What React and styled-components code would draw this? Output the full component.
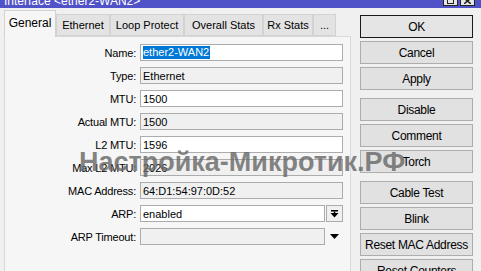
import React from "react";
import styled, { createGlobalStyle } from "styled-components";

const Global = createGlobalStyle`
  html, body { margin: 0; padding: 0; background: #f0f0f0; overflow: hidden; }
  * { box-sizing: border-box; }
`;

const Window = styled.div`
  position: relative;
  width: 481px;
  height: 271px;
  overflow: hidden;
  background: #f0f0f0;
  font-family: "Liberation Sans", Arial, sans-serif;
  font-size: 11px;
  color: #000;
`;

const TitleBar = styled.div`
  height: 8px;
  background: #5052c8;
  display: flex;
  justify-content: space-between;
  align-items: flex-end;
  overflow: hidden;
  padding: 0 6px 0 4px;
`;

const TitleText = styled.div`
  color: #fff;
  font-size: 12px;
  line-height: 12px;
  margin-bottom: 1px;
  white-space: nowrap;
`;

const WinButtons = styled.div`
  display: flex;
  gap: 2px;
  align-items: flex-end;
  margin-bottom: 2px;
`;

const WinBtn = styled.div`
  width: 15px;
  height: 12px;
  background: #e6e6e6;
  border: 1px solid #222;
  display: flex;
  align-items: flex-end;
  justify-content: center;
  padding-bottom: 1px;
`;

const Main = styled.div`
  display: flex;
  padding: 2px 0 0 4px;
`;

const LeftCol = styled.div`
  width: 347px;
  display: flex;
  flex-direction: column;
`;

const TabBar = styled.div`
  display: flex;
  align-items: flex-end;
  height: 26px;
`;

const Tab = styled.div`
  position: relative;
  width: ${(p) => p.$w}px;
  height: ${(p) => (p.$active ? 27 : 22)}px;
  margin-bottom: ${(p) => (p.$active ? -1 : 0)}px;
  z-index: ${(p) => (p.$active ? 2 : 1)};
  background: ${(p) => (p.$active ? "#f6f6f6" : "#e3e3e3")};
  border: 1px solid #d2d2d2;
  border-bottom: ${(p) => (p.$active ? "none" : "1px solid #d2d2d2")};
  display: flex;
  align-items: center;
  justify-content: center;
  padding-bottom: ${(p) => (p.$active ? 3 : 0)}px;
  font-size: ${(p) => (p.$active ? 12 : 11)}px;
  white-space: nowrap;
`;

const Panel = styled.div`
  height: 240px;
  background: #f6f6f6;
  border: 1px solid #d9d9d9;
  border-bottom: none;
  padding: 7px 0 0 0;
  display: flex;
  flex-direction: column;
  gap: 6px;
`;

const Row = styled.div`
  display: flex;
  align-items: center;
  height: 17px;
`;

const Label = styled.div`
  width: 131px;
  margin-right: 4px;
  text-align: right;
  white-space: nowrap;
  letter-spacing: -0.2px;
`;

const Field = styled.div`
  width: ${(p) => p.$w || 203}px;
  height: 17px;
  background: ${(p) => (p.$ro ? "#f0f0f0" : "#ffffff")};
  border: 1px solid #acacac;
  display: flex;
  align-items: center;
  padding-left: 2px;
  white-space: nowrap;
  overflow: hidden;
`;

const Selected = styled.span`
  background: #0078d7;
  color: #fff;
  line-height: 13px;
  padding-right: 1px;
`;

const DropBtn = styled.div`
  width: 17px;
  height: 17px;
  margin-left: 1px;
  background: #f0f0f0;
  border: 1px solid #acacac;
  display: flex;
  align-items: center;
  justify-content: center;
`;

const DropArrow = styled.div`
  width: 17px;
  height: 17px;
  margin-left: 1px;
  display: flex;
  align-items: center;
  justify-content: center;
`;

const RightCol = styled.div`
  width: 113px;
  margin-left: 9px;
  margin-top: 5px;
  display: flex;
  flex-direction: column;
  gap: 8px;
`;

const Group = styled.div`
  display: flex;
  flex-direction: column;
  gap: 3px;
`;

const Button = styled.div`
  height: 23px;
  background: ${(p) => (p.$default ? "#e5e5e5" : "#e1e1e1")};
  border: 1px solid ${(p) => (p.$default ? "#1a1a1a" : "#adadad")};
  display: flex;
  align-items: center;
  justify-content: center;
  white-space: nowrap;
  font-size: 12px;
  letter-spacing: -0.3px;
`;

const Watermark = styled.div`
  position: absolute;
  left: 79px;
  top: 149px;
  font-family: "Liberation Sans", Arial, sans-serif;
  font-weight: bold;
  font-size: 27px;
  line-height: 27px;
  color: rgba(105, 105, 105, 0.82);
  white-space: nowrap;
  pointer-events: none;
`;

const tabs = [
  { t: "General", w: 52, active: true },
  { t: "Ethernet", w: 54 },
  { t: "Loop Protect", w: 74 },
  { t: "Overall Stats", w: 79 },
  { t: "Rx Stats", w: 50 },
  { t: "...", w: 23 },
];

const rows = [
  { l: "Name:", v: "ether2-WAN2", sel: true },
  { l: "Type:", v: "Ethernet", ro: true },
  { l: "MTU:", v: "1500" },
  { l: "Actual MTU:", v: "1500", ro: true },
  { l: "L2 MTU:", v: "1596" },
  { l: "Max L2 MTU:", v: "2026", ro: true },
  { l: "MAC Address:", v: "64:D1:54:97:0D:52", ro: true },
];

const groups = [
  ["OK", "Cancel", "Apply"],
  ["Disable", "Comment", "Torch"],
  ["Cable Test", "Blink", "Reset MAC Address", "Reset Counters"],
];

export default function App() {
  return (
    <Window>
      <Global />
      <TitleBar>
        <TitleText>Interface &lt;ether2-WAN2&gt;</TitleText>
        <WinButtons>
          <WinBtn>
            <svg width="7" height="6" viewBox="0 0 7 6">
              <rect x="0.5" y="0.5" width="6" height="5" fill="none" stroke="#222" />
            </svg>
          </WinBtn>
          <WinBtn>
            <svg width="7" height="6" viewBox="0 0 7 6">
              <path d="M0 0 L7 6 M7 0 L0 6" stroke="#222" strokeWidth="1.5" />
            </svg>
          </WinBtn>
        </WinButtons>
      </TitleBar>
      <Main>
        <LeftCol>
          <TabBar>
            {tabs.map((t) => (
              <Tab key={t.t} $w={t.w} $active={t.active}>
                {t.t}
              </Tab>
            ))}
          </TabBar>
          <Panel>
            {rows.map((r) => (
              <Row key={r.l}>
                <Label>{r.l}</Label>
                <Field $ro={r.ro}>
                  {r.sel ? <Selected>{r.v}</Selected> : r.v}
                </Field>
              </Row>
            ))}
            <Row>
              <Label>ARP:</Label>
              <Field $w={185}>enabled</Field>
              <DropBtn>
                <svg width="9" height="8" viewBox="0 0 9 8">
                  <rect x="1" y="0" width="7" height="1.5" fill="#000" />
                  <path d="M4.5 1.5 V3" stroke="#000" strokeWidth="1.5" />
                  <path d="M0.5 3 H8.5 L4.5 7.5 Z" fill="#000" />
                </svg>
              </DropBtn>
            </Row>
            <Row>
              <Label>ARP Timeout:</Label>
              <Field $w={185} $ro />
              <DropArrow>
                <svg width="9" height="5" viewBox="0 0 9 5">
                  <path d="M0 0 H9 L4.5 5 Z" fill="#000" />
                </svg>
              </DropArrow>
            </Row>
          </Panel>
        </LeftCol>
        <RightCol>
          {groups.map((g, i) => (
            <Group key={i}>
              {g.map((b) => (
                <Button key={b} $default={b === "OK"}>
                  {b}
                </Button>
              ))}
            </Group>
          ))}
        </RightCol>
      </Main>
      <Watermark>Настройка-Микротик.РФ</Watermark>
    </Window>
  );
}
